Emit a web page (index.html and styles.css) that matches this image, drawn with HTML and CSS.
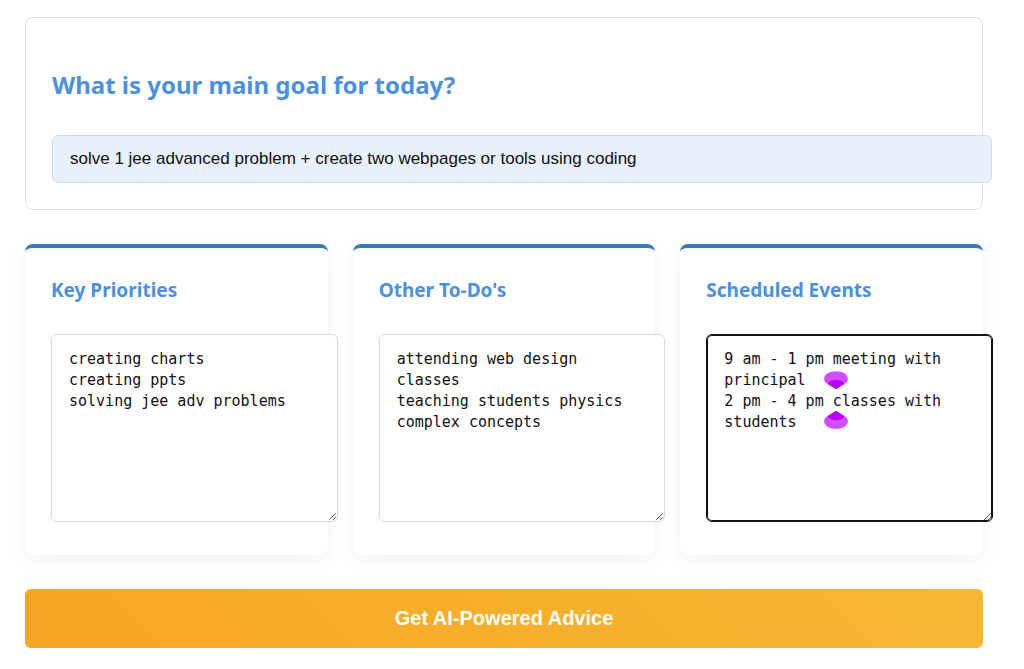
FILE: index.html
```html
<!DOCTYPE html>
<html lang="en">
<head>
<meta charset="utf-8">
<title>Daily Planner</title>
<link rel="stylesheet" href="styles.css">
</head>
<body>
<main class="planner">
  <section class="goal">
    <h2 class="goal-title"><label for="goal">What is your main goal for today?</label></h2>
    <input class="field goal-input" id="goal" type="text" value="solve 1 jee advanced problem + create two webpages or tools using coding">
  </section>
  <div class="columns">
    <section class="card">
      <h3 class="card-title"><label for="priorities">Key Priorities</label></h3>
      <textarea class="field notes" id="priorities" spellcheck="false">creating charts
creating ppts
solving jee adv problems</textarea>
    </section>
    <section class="card">
      <h3 class="card-title"><label for="todos">Other To-Do's</label></h3>
      <textarea class="field notes" id="todos" spellcheck="false">attending web design classes
teaching students physics complex concepts</textarea>
    </section>
    <section class="card">
      <h3 class="card-title"><label for="events">Scheduled Events</label></h3>
      <div class="notes-wrap">
        <textarea class="field notes notes-active" id="events" spellcheck="false">9 am - 1 pm meeting with principal
2 pm - 4 pm classes with students</textarea>
        <svg class="marker" width="24" height="58" viewBox="0 0 24 58" aria-hidden="true">
          <path fill="#d24dff" d="M12 18 L3.5 13 C-1 10.5 -1 5 3.5 2.3 C8 -.5 16 -.5 20.5 2.3 C25 5 25 10.5 20.5 13Z"/>
          <path fill="#b900ff" d="M12 18 L4 13 C5 7.5 19 7.5 20 13Z"/>
          <path fill="#d24dff" d="M12 40 L3.5 45 C-1 47.5 -1 53 3.5 55.7 C8 58.5 16 58.5 20.5 55.7 C25 53 25 47.5 20.5 45Z"/>
          <path fill="#b900ff" d="M12 40 L4 45 C5 50.5 19 50.5 20 45Z"/>
        </svg>
      </div>
    </section>
  </div>
  <button class="advice" type="button">Get AI-Powered Advice</button>
</main>
</body>
</html>
```
FILE: styles.css
```css
body {
  margin: 0;
  background: #fff;
  font-family: "Segoe UI", "Noto Sans", "Open Sans", sans-serif;
  color: #111;
}

.planner {
  display: flex;
  flex-direction: column;
  gap: 34px;
  padding: 17px 41px 20px 25px;
}

.goal {
  padding: 49px 26px 26px;
  border: 1px solid #d9dee5;
  border-radius: 8px;
}

.goal-title {
  margin: 0 0 33px;
  font-size: 24px;
  line-height: 35px;
  color: #4a90e2;
}

.field {
  display: block;
  box-sizing: content-box;
  width: 100%;
  margin: 0;
  border: 1px solid #d5dbe6;
  border-radius: 6px;
  color: #111;
}

.goal-input {
  height: 20px;
  padding: 13px 17px;
  background: #e8effd;
  font-family: "Liberation Sans", Arial, sans-serif;
  font-size: 17px;
}

.columns {
  display: grid;
  grid-template-columns: repeat(3, minmax(0, 1fr));
  gap: 25px;
}

.card {
  padding: 26px 26px 33px;
  border-top: 4px solid #357abd;
  border-radius: 8px;
  background: #fff;
  box-shadow: 0 4px 20px rgba(0, 0, 0, 0.06);
}

.card-title {
  margin: 0 0 28px;
  font-size: 19px;
  line-height: 32px;
  color: #4a90e2;
}

.notes-wrap {
  position: relative;
}

.notes {
  height: 158px;
  padding: 14px 17px;
  background: #fff;
  font-family: "DejaVu Sans Mono", monospace;
  font-size: 15px;
  line-height: 21px;
  resize: vertical;
}

.notes-active {
  border-color: #111;
  box-shadow: inset 0 0 0 1px #111;
}

.marker {
  position: absolute;
  top: 37px;
  left: 118px;
  pointer-events: none;
}

.advice {
  padding: 17px;
  border: 0;
  border-radius: 6px;
  background: linear-gradient(45deg, #f5a623, #f7b733);
  color: #fff;
  font-family: "Liberation Sans", Arial, sans-serif;
  font-size: 20px;
  font-weight: 700;
  line-height: 25px;
}
```
